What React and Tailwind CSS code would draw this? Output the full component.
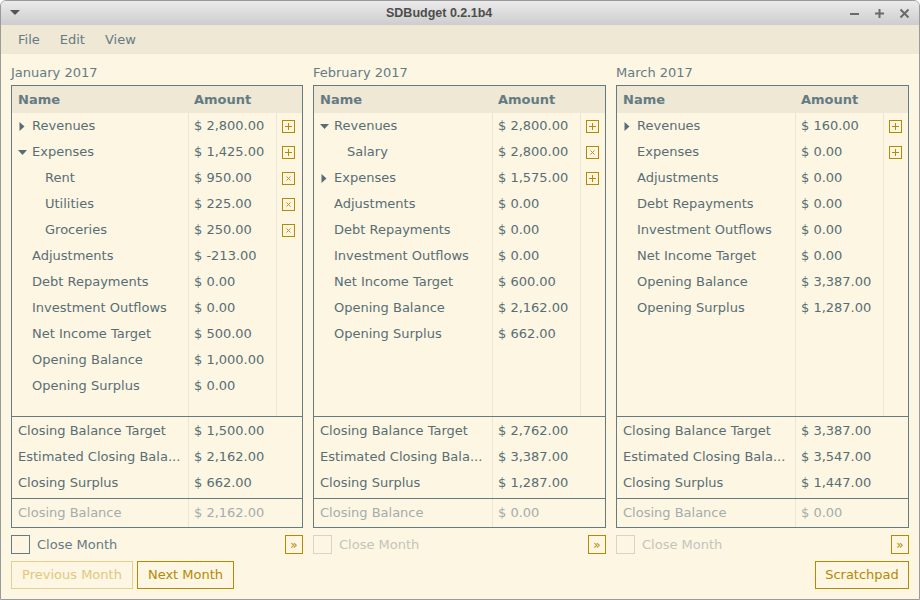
import React from "react";

const months = [
  {
    label: "January 2017",
    nameW: "grid-cols-[177px_88px_1fr]",
    footW: "grid-cols-[177px_1fr]",
    rows: [
      { name: "Revenues", amount: "$ 2,800.00", arrow: "right", btn: "plus" },
      { name: "Expenses", amount: "$ 1,425.00", arrow: "down", btn: "plus" },
      { name: "Rent", amount: "$ 950.00", child: true, btn: "x" },
      { name: "Utilities", amount: "$ 225.00", child: true, btn: "x" },
      { name: "Groceries", amount: "$ 250.00", child: true, btn: "x" },
      { name: "Adjustments", amount: "$ -213.00" },
      { name: "Debt Repayments", amount: "$ 0.00" },
      { name: "Investment Outflows", amount: "$ 0.00" },
      { name: "Net Income Target", amount: "$ 500.00" },
      { name: "Opening Balance", amount: "$ 1,000.00" },
      { name: "Opening Surplus", amount: "$ 0.00" },
    ],
    footer: ["$ 1,500.00", "$ 2,162.00", "$ 662.00"],
    closing: "$ 2,162.00",
    closeEnabled: true,
  },
  {
    label: "February 2017",
    nameW: "grid-cols-[179px_88px_1fr]",
    footW: "grid-cols-[179px_1fr]",
    rows: [
      { name: "Revenues", amount: "$ 2,800.00", arrow: "down", btn: "plus" },
      { name: "Salary", amount: "$ 2,800.00", child: true, btn: "x" },
      { name: "Expenses", amount: "$ 1,575.00", arrow: "right", btn: "plus" },
      { name: "Adjustments", amount: "$ 0.00" },
      { name: "Debt Repayments", amount: "$ 0.00" },
      { name: "Investment Outflows", amount: "$ 0.00" },
      { name: "Net Income Target", amount: "$ 600.00" },
      { name: "Opening Balance", amount: "$ 2,162.00" },
      { name: "Opening Surplus", amount: "$ 662.00" },
    ],
    footer: ["$ 2,762.00", "$ 3,387.00", "$ 1,287.00"],
    closing: "$ 0.00",
    closeEnabled: false,
  },
  {
    label: "March 2017",
    nameW: "grid-cols-[179px_88px_1fr]",
    footW: "grid-cols-[179px_1fr]",
    rows: [
      { name: "Revenues", amount: "$ 160.00", arrow: "right", btn: "plus" },
      { name: "Expenses", amount: "$ 0.00", btn: "plus" },
      { name: "Adjustments", amount: "$ 0.00" },
      { name: "Debt Repayments", amount: "$ 0.00" },
      { name: "Investment Outflows", amount: "$ 0.00" },
      { name: "Net Income Target", amount: "$ 0.00" },
      { name: "Opening Balance", amount: "$ 3,387.00" },
      { name: "Opening Surplus", amount: "$ 1,287.00" },
    ],
    footer: ["$ 3,387.00", "$ 3,547.00", "$ 1,447.00"],
    closing: "$ 0.00",
    closeEnabled: false,
  },
];

const footerNames = ["Closing Balance Target", "Estimated Closing Bala...", "Closing Surplus"];

function Arrow({ dir }) {
  if (dir === "down") {
    return (
      <svg width="9" height="9" viewBox="0 0 9 9" className="mr-[5px]">
        <path d="M0 2 L9 2 L4.5 7 Z" fill="#586e75" />
      </svg>
    );
  }
  return (
    <svg width="9" height="9" viewBox="0 0 9 9" className="mr-[5px]">
      <path d="M1.5 0 L6.5 4.5 L1.5 9 Z" fill="#586e75" />
    </svg>
  );
}

function RowButton({ type }) {
  return (
    <div className="w-[13px] h-[13px] border border-[#b58900] flex items-center justify-center">
      {type === "plus" ? (
        <svg width="7" height="7" viewBox="0 0 7 7">
          <path d="M3.5 0 V7 M0 3.5 H7" stroke="#b58900" strokeWidth="1" />
        </svg>
      ) : (
        <svg width="5" height="5" viewBox="0 0 5 5">
          <path d="M0.5 0.5 L4.5 4.5 M4.5 0.5 L0.5 4.5" stroke="#cb8a16" strokeWidth="1" />
        </svg>
      )}
    </div>
  );
}

function MonthTable({ m }) {
  return (
    <div className="flex flex-col">
      <div className="h-[16px] leading-[16px] text-[#657b83] mb-[4px]">{m.label}</div>
      <div className="border border-[#657b83] flex flex-col">
        <div className={"h-[27px] bg-[#eee8d5] grid items-center font-bold text-[#657b83] " + m.nameW}>
          <div className="pl-[6px]">Name</div>
          <div className="pl-[5px]">Amount</div>
          <div />
        </div>
        <div className="h-[303px] flex flex-col">
          {m.rows.map((r, i) => (
            <div key={i} className={"h-[26px] grid " + m.nameW}>
              <div
                className={
                  "border-r border-[#ece6d6] flex items-center " +
                  (r.child ? "pl-[33px]" : r.arrow ? "pl-[6px]" : "pl-[20px]")
                }
              >
                {r.arrow && <Arrow dir={r.arrow} />}
                <span>{r.name}</span>
              </div>
              <div className="border-r border-[#ece6d6] flex items-center pl-[5px]">{r.amount}</div>
              <div className="flex items-center pl-[5px]">{r.btn && <RowButton type={r.btn} />}</div>
            </div>
          ))}
          <div className={"flex-1 grid " + m.nameW}>
            <div className="border-r border-[#ece6d6]" />
            <div className="border-r border-[#ece6d6]" />
            <div />
          </div>
        </div>
        <div className={"border-t border-[#657b83] h-[82px] grid " + m.footW}>
          <div className="border-r border-[#ece6d6] pt-[1px]">
            {footerNames.map((n) => (
              <div key={n} className="h-[26px] flex items-center pl-[6px] whitespace-nowrap">
                {n}
              </div>
            ))}
          </div>
          <div className="pt-[1px]">
            {m.footer.map((a, i) => (
              <div key={i} className="h-[26px] flex items-center pl-[5px]">
                {a}
              </div>
            ))}
          </div>
        </div>
        <div className={"border-t border-[#657b83] h-[29px] grid text-[#a3adad] " + m.footW}>
          <div className="border-r border-[#ece6d6] flex items-center pl-[6px]">Closing Balance</div>
          <div className="flex items-center pl-[5px]">{m.closing}</div>
        </div>
      </div>
      <div className="mt-[7px] h-[19px] flex items-center justify-between">
        <div className="flex items-center">
          <div
            className={
              "w-[19px] h-[19px] border " +
              (m.closeEnabled ? "border-[#657b83]" : "border-[#d6d3c7]")
            }
          />
          <span className={"ml-[7px] " + (m.closeEnabled ? "text-[#657b83]" : "text-[#c4c4bb]")}>
            Close Month
          </span>
        </div>
        <div className="w-[18px] h-[19px] border border-[#b58900] flex items-center justify-center text-[12px] text-[#b58900] leading-none">
          »
        </div>
      </div>
    </div>
  );
}

export default function App() {
  return (
    <div
      className="w-[920px] h-[600px] bg-[#fdf6e3] border border-[#9a9a9a] rounded-t-[6px] overflow-hidden flex flex-col text-[13px] text-[#586e75]"
      style={{ fontFamily: '"DejaVu Sans", sans-serif' }}
    >
      {/* title bar */}
      <div className="h-[24px] shrink-0 bg-gradient-to-b from-[#ebebeb] to-[#cdcdcd] flex items-center relative">
        <svg width="10" height="6" viewBox="0 0 10 6" className="ml-[9px]">
          <path d="M0 0 L10 0 L5 5 Z" fill="#555" />
        </svg>
        <div
          className="absolute left-[385px] font-bold text-[12.5px] text-[#4d4d4d]"
          style={{ fontFamily: '"Liberation Sans", sans-serif' }}
        >
          SDBudget 0.2.1b4
        </div>
        <div className="ml-auto flex items-center gap-[14px] mr-[9px]">
          <svg width="11" height="11" viewBox="0 0 11 11">
            <path d="M1 6 H10" stroke="#6a6a6a" strokeWidth="2" />
          </svg>
          <svg width="11" height="11" viewBox="0 0 11 11">
            <path d="M1 5.5 H10 M5.5 1 V10" stroke="#6a6a6a" strokeWidth="2" />
          </svg>
          <svg width="11" height="11" viewBox="0 0 11 11">
            <path d="M1.5 1.5 L9.5 9.5 M9.5 1.5 L1.5 9.5" stroke="#6a6a6a" strokeWidth="2" />
          </svg>
        </div>
      </div>
      {/* menu bar */}
      <div className="h-[29px] shrink-0 bg-[#eee8d5] flex items-center pl-[17px] gap-[20px] text-[#657b83]">
        <span>File</span>
        <span>Edit</span>
        <span>View</span>
      </div>
      {/* content */}
      <div className="flex-1 px-[10px] pt-[11px]">
        <div className="grid grid-cols-[292px_293px_293px] gap-[10px]">
          {months.map((m) => (
            <MonthTable key={m.label} m={m} />
          ))}
        </div>
        <div className="mt-[7px] flex items-center">
          <div className="w-[122px] h-[28px] border border-[#e5cf8f] text-[#e3c77d] flex items-center justify-center">
            Previous Month
          </div>
          <div className="w-[97px] h-[28px] ml-[4px] border border-[#b58900] text-[#b58900] flex items-center justify-center">
            Next Month
          </div>
          <div className="ml-auto w-[94px] h-[28px] border border-[#b58900] text-[#b58900] flex items-center justify-center">
            Scratchpad
          </div>
        </div>
      </div>
    </div>
  );
}
